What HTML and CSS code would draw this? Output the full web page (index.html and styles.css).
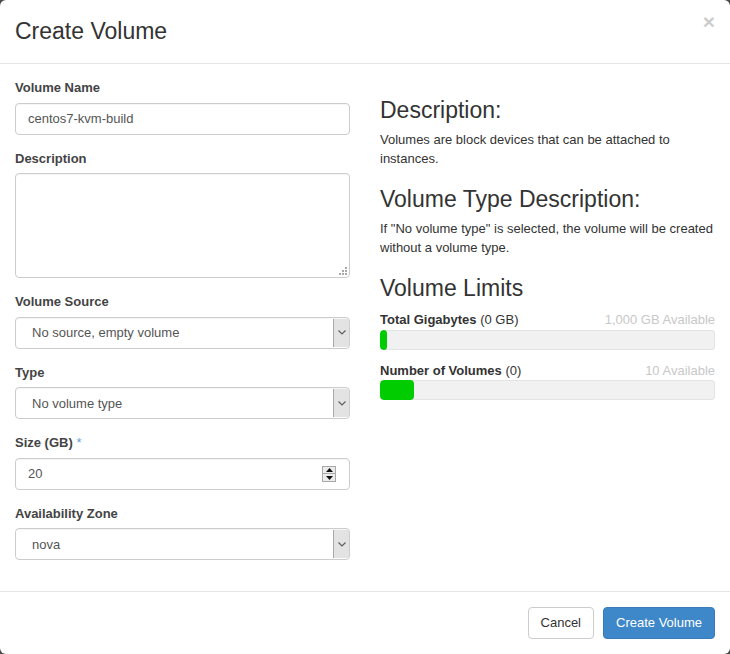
FILE: index.html
```html
<!DOCTYPE html>
<html>
<head>
<meta charset="utf-8">
<link rel="stylesheet" href="styles.css">
</head>
<body>
<div class="modal">
  <div class="modal-header">
    <h3 class="modal-title">Create Volume</h3>
    <span class="close">×</span>
  </div>
  <div class="modal-body">
    <div class="col-left">
      <div class="form-group">
        <label class="label">Volume Name</label>
        <div class="control"><input class="input" type="text" value="centos7-kvm-build"></div>
      </div>
      <div class="form-group">
        <label class="label">Description</label>
        <div class="textarea-wrap">
          <textarea class="textarea"></textarea>
          <svg class="grip" width="8" height="8" viewBox="0 0 8 8"><g fill="#a8a8a8"><rect x="6" y="0" width="2" height="2"/><rect x="3" y="3" width="2" height="2"/><rect x="6" y="3" width="2" height="2"/><rect x="0" y="6" width="2" height="2"/><rect x="3" y="6" width="2" height="2"/><rect x="6" y="6" width="2" height="2"/></g></svg>
        </div>
      </div>
      <div class="form-group">
        <label class="label">Volume Source</label>
        <div class="control select-wrap">
          <select class="select"><option>No source, empty volume</option></select>
          <span class="select-arrow"><svg width="8" height="5" viewBox="0 0 8 5"><path d="M0.5 0.5 L4 4 L7.5 0.5" fill="none" stroke="#5a5a5a" stroke-width="1.1"/></svg></span>
        </div>
      </div>
      <div class="form-group">
        <label class="label">Type</label>
        <div class="control select-wrap">
          <select class="select"><option>No volume type</option></select>
          <span class="select-arrow"><svg width="8" height="5" viewBox="0 0 8 5"><path d="M0.5 0.5 L4 4 L7.5 0.5" fill="none" stroke="#5a5a5a" stroke-width="1.1"/></svg></span>
        </div>
      </div>
      <div class="form-group">
        <label class="label">Size (GB) <span class="req">*</span></label>
        <div class="control number-wrap">
          <input class="input input-flat" type="text" value="20">
          <span class="spinner">
            <span class="spin-btn"><svg width="7" height="4" viewBox="0 0 7 4"><path d="M3.5 0 L7 4 L0 4 Z" fill="#111"/></svg></span>
            <span class="spin-btn"><svg width="7" height="4" viewBox="0 0 7 4"><path d="M0 0 L7 0 L3.5 4 Z" fill="#111"/></svg></span>
          </span>
        </div>
      </div>
      <div class="form-group">
        <label class="label">Availability Zone</label>
        <div class="control select-wrap">
          <select class="select"><option>nova</option></select>
          <span class="select-arrow"><svg width="8" height="5" viewBox="0 0 8 5"><path d="M0.5 0.5 L4 4 L7.5 0.5" fill="none" stroke="#5a5a5a" stroke-width="1.1"/></svg></span>
        </div>
      </div>
    </div>
    <div class="col-right">
      <h3 class="heading">Description:</h3>
      <p class="text">Volumes are block devices that can be attached to instances.</p>
      <h3 class="heading">Volume Type Description:</h3>
      <p class="text">If "No volume type" is selected, the volume will be created without a volume type.</p>
      <h3 class="heading heading-limits">Volume Limits</h3>
      <div class="quota">
        <div class="quota-title"><span><strong>Total Gigabytes</strong> (0 GB)</span><span class="avail">1,000 GB Available</span></div>
        <div class="progress"><div class="bar" style="width:7px"></div></div>
      </div>
      <div class="quota">
        <div class="quota-title"><span><strong>Number of Volumes</strong> (0)</span><span class="avail">10 Available</span></div>
        <div class="progress"><div class="bar" style="width:10%"></div></div>
      </div>
    </div>
  </div>
  <div class="modal-footer">
    <button class="btn btn-default">Cancel</button>
    <button class="btn btn-primary">Create Volume</button>
  </div>
</div>
</body>
</html>
```

FILE: styles.css
```css
* { box-sizing: border-box; }
html, body {
  margin: 0;
  padding: 0;
  background: #4a4a4a;
}
body {
  font-family: "Liberation Sans", Arial, Helvetica, sans-serif;
  font-size: 13px;
  line-height: 1.428;
  color: #333;
}
.modal {
  width: 730px;
  height: 654px;
  background: #fff;
  border-radius: 6px;
  overflow: hidden;
  display: flex;
  flex-direction: column;
}
.modal-header {
  display: flex;
  justify-content: space-between;
  align-items: flex-start;
  padding: 15px;
  border-bottom: 1px solid #e5e5e5;
}
.modal-title {
  margin: 0;
  font-size: 23px;
  font-weight: normal;
  line-height: 33px;
  color: #333;
}
.close {
  font-size: 21px;
  font-weight: bold;
  line-height: 1;
  color: #000;
  opacity: 0.2;
  margin-top: -4px;
}
.modal-body {
  flex: 1;
  padding: 15px;
  display: grid;
  grid-template-columns: 1fr 1fr;
  column-gap: 30px;
  align-items: start;
}
.form-group {
  margin-bottom: 15px;
}
.label {
  display: block;
  font-weight: bold;
  color: #444;
  margin-bottom: 5px;
}
.req {
  color: #6b9fd6;
  font-weight: normal;
}
.control {
  height: 32px;
  border: 1px solid #ccc;
  border-radius: 4px;
  background: #fff;
  box-shadow: inset 0 1px 1px rgba(0,0,0,0.04);
}
.input {
  width: 100%;
  height: 100%;
  border: none;
  background: transparent;
  padding: 0 12px;
  font-family: inherit;
  font-size: 13px;
  color: #555;
  outline: none;
}
.textarea-wrap {
  position: relative;
  height: 105px;
}
.textarea {
  display: block;
  width: 100%;
  height: 105px;
  border: 1px solid #ccc;
  border-radius: 4px;
  resize: none;
  font-family: inherit;
  font-size: 13px;
  padding: 6px 12px;
  outline: none;
  box-shadow: inset 0 1px 1px rgba(0,0,0,0.04);
}
.grip {
  position: absolute;
  right: 3px;
  bottom: 3px;
}
.select-wrap {
  display: flex;
  align-items: stretch;
  padding: 1px 0 1px 0;
}
.select {
  flex: 1;
  min-width: 0;
  -webkit-appearance: none;
  appearance: none;
  border: none;
  background: transparent;
  padding: 0 0 0 16px;
  font-family: inherit;
  font-size: 13px;
  color: #555;
  outline: none;
}
.select-arrow {
  width: 16px;
  background: #e3e3e3;
  border-left: 1px solid #a8a8a8;
  display: flex;
  align-items: center;
  justify-content: center;
}
.number-wrap {
  display: flex;
  align-items: center;
  padding-right: 13px;
}
.input-flat {
  flex: 1;
}
.spinner {
  display: flex;
  flex-direction: column;
  width: 14px;
  height: 16px;
  border: 1px solid #a9a9a9;
  background: #ececec;
}
.spin-btn {
  flex: 1;
  display: flex;
  align-items: center;
  justify-content: center;
}
.spin-btn + .spin-btn {
  border-top: 1px solid #a9a9a9;
}
.heading {
  font-size: 23px;
  font-weight: normal;
  line-height: 26px;
  margin: 18px 0 8px;
  color: #333;
}
.heading-limits {
  margin-bottom: 10px;
}
.text {
  margin: 0 0 10px;
  color: #333;
}
.quota {
  margin-bottom: 12px;
}
.quota-title {
  display: flex;
  justify-content: space-between;
  color: #333;
}
.avail {
  color: #c8c8c8;
}
.progress {
  height: 20px;
  background: #f1f1f1;
  border-radius: 4px;
  box-shadow: inset 0 0 0 1px #e4e4e4;
  overflow: hidden;
}
.bar {
  height: 100%;
  background: #00cc00;
  border-radius: 4px;
}
.modal-footer {
  border-top: 1px solid #e5e5e5;
  padding: 15px;
  display: flex;
  justify-content: flex-end;
  gap: 9px;
}
.btn {
  font-family: inherit;
  font-size: 13px;
  line-height: 18px;
  height: 32px;
  padding: 6px 12px;
  border-radius: 4px;
  border: 1px solid transparent;
}
.btn-default {
  background: #fff;
  border-color: #ccc;
  color: #333;
}
.btn-primary {
  background: #3e87c9;
  border-color: #387cbb;
  color: #fff;
}
```
